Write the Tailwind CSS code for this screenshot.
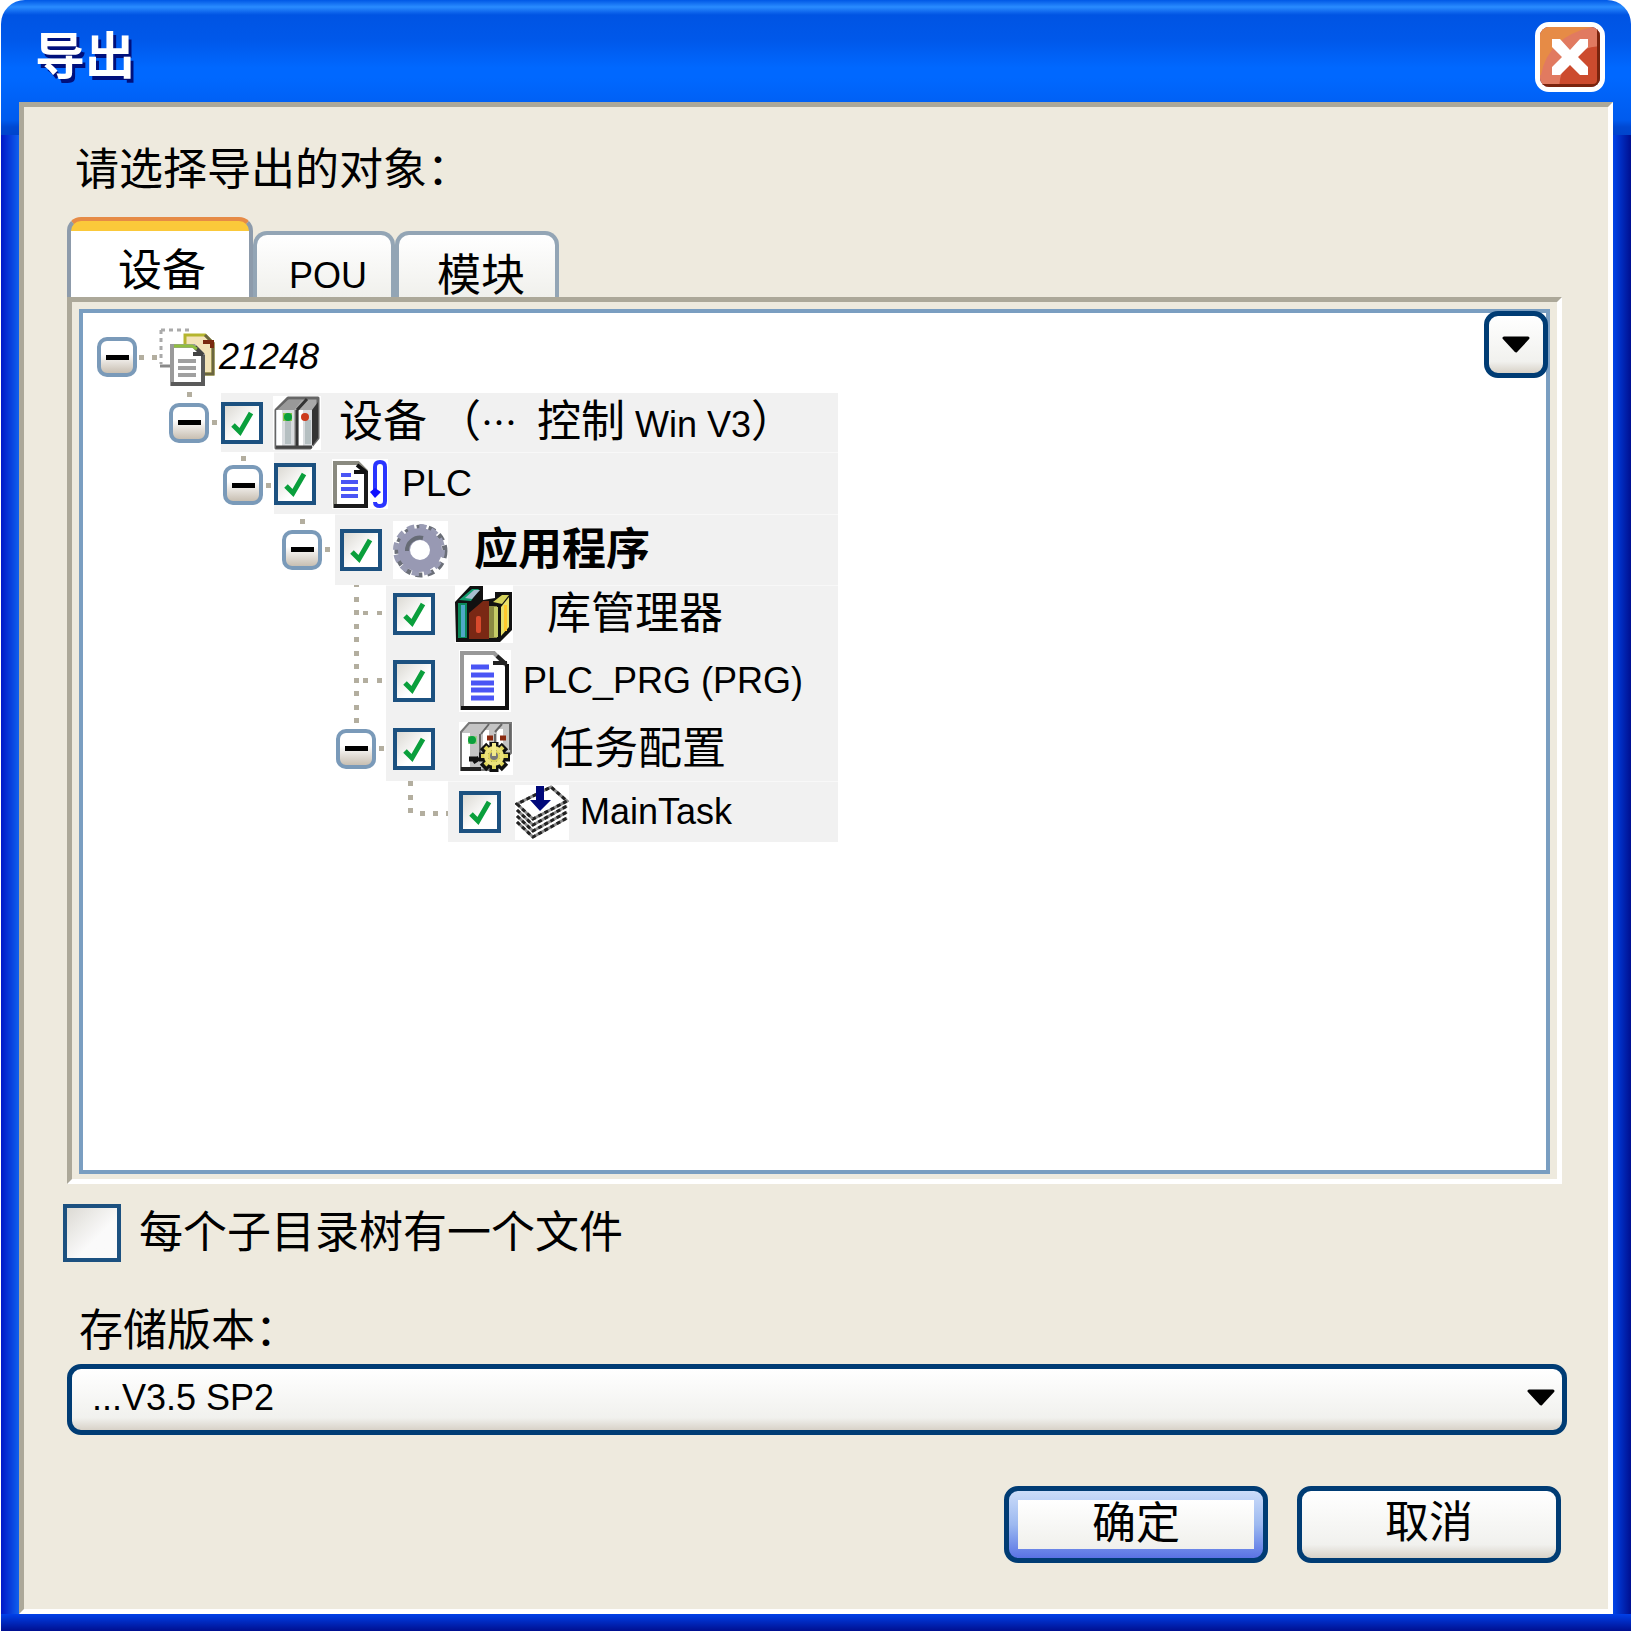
<!DOCTYPE html>
<html lang="zh-CN">
  <head>
    <meta charset="UTF-8" />
    <meta name="viewport" content="width=device-width, initial-scale=1.0" />
    <title>导出</title>
    <script src="https://cdn.jsdelivr.net/npm/@tailwindcss/browser@4"></script>
  </head>
  <body
    class="bg-white px-px pb-px min-h-screen flex flex-col text-black text-[44px] leading-[48px] font-['Liberation_Sans','Noto_Sans_CJK_SC',sans-serif]"
  >
    <!-- icons used more than once -->
    <svg class="hidden">
      <symbol id="tick" viewBox="0 0 42 42">
        <path d="M12 23l7 7L30 11" fill="none" stroke="#0a9f3c" stroke-width="5" />
      </symbol>
      <symbol id="arrow" viewBox="0 0 28 17">
        <path
          d="M2 2h24L14 15z"
          stroke="#000"
          stroke-width="3"
          stroke-linejoin="round"
        />
      </symbol>
    </svg>
    <div
      class="flex-1 flex flex-col px-[18px] pb-[17px] rounded-t-[24px] [background:linear-gradient(#0058e6,#2a8cff_7px,#0a60ea_13px,#0054e3_15px,#0058ea_40px,#0068ff_68px,#0068ff_78px,#005bee_120px,#0048d2_127px,#0044cc_135px)_0_0/100%_135px_no-repeat,linear-gradient(#0040e8,#000f90)_0_100%/100%_17px_no-repeat,linear-gradient(90deg,#0018c8,#1060ee)_0_0/18px_100%_no-repeat,linear-gradient(90deg,#0044e8,#000f90)_100%_0/18px_100%_no-repeat]"
    >
      <header class="h-[102px] flex items-center justify-between pl-4 pr-2 pt-3">
        <h1
          class="text-[50px] leading-[64px] font-bold text-white [text-shadow:3px_4px_0_#00107c]"
        >
          导出
        </h1>
        <button
          type="button"
          aria-label="关闭"
          class="w-[70px] h-[70px] rounded-[14px] border-[5px] border-white overflow-hidden"
        >
          <svg viewBox="0 0 60 60" class="w-full h-full">
            <rect width="60" height="60" fill="#cc4b2e" />
            <path d="M0 0h60v19Q22 22 19 60H0z" fill="#e17a60" />
            <path d="M0 0h52Q8 10 1 48H0z" fill="#e68b46" />
            <path d="M57 2v51q0 4-4 4H2v3h58V2z" fill="#7a240e" />
            <path
              d="M12 12h8l10 11 10-11h8v8L38 30l10 10v8h-8L30 38 20 48h-8v-8l10-10-10-10z"
              fill="#fff"
            />
          </svg>
        </button>
      </header>
      <main
        class="flex-1 flex flex-col bg-[#eeeade] border-[5px] border-t-[#aca899] border-l-[#aca899] border-r-white border-b-white pl-[39px] pr-[41px] pt-[39px] pb-[46px]"
      >
        <p class="ml-3">请选择导出的对象：</p>

        <div class="ml-1 mt-[23px] h-20 flex items-end leading-10" role="tablist">
          <button
            type="button"
            role="tab"
            aria-selected="true"
            class="w-[186px] h-20 rounded-t-[14px] border-4 border-b-0 border-x-[#8d9bab] border-t-[#e68b46] pt-6 pl-1 bg-linear-to-b from-[#fbc93a] from-[10px] to-white to-[10px]"
          >
            设备
          </button>
          <button
            type="button"
            role="tab"
            class="w-[142px] h-[66px] rounded-t-[14px] border-4 border-b-0 border-[#93a5b5] pt-5 pl-2 text-[36px] bg-linear-to-b from-white to-[#f0f0ec]"
          >
            POU
          </button>
          <button
            type="button"
            role="tab"
            class="w-[164px] h-[66px] rounded-t-[14px] border-4 border-b-0 border-[#93a5b5] pt-5 pl-2 bg-linear-to-b from-white to-[#f0f0ec]"
          >
            模块
          </button>
        </div>

        <div
          class="flex-1 flex ml-1 mr-[5px] border-[5px] border-t-[#aca899] border-l-[#aca899] border-r-white border-b-white px-[7px] pt-[7px] pb-[5px]"
        >
          <div class="flex-1 relative bg-white border-4 border-[#7a9ec1]">
            <button
              type="button"
              aria-label="展开"
              class="absolute -top-[2px] -right-[2px] w-16 h-[67px] grid place-items-center rounded-[14px] border-[5px] border-[#003c74] bg-linear-to-b from-white via-[#f1f1ee] via-80% to-[#d8d2c8]"
            >
              <svg class="w-7 h-[17px]"><use href="#arrow" /></svg>
            </button>

            <ul class="max-w-[755px]">
              <li class="h-20 flex items-center pt-2 pl-[14px]">
                <button
                  type="button"
                  aria-label="折叠"
                  class="w-10 h-10 grid place-items-center rounded-[10px] border-4 border-[#7a9ab9] bg-linear-to-b from-white from-40% to-[#c8bfb2]"
                >
                  <span class="w-[23px] h-[5px] bg-black"></span>
                </button>
                <span class="w-[5px] h-[5px] ml-[2px] bg-[#b3ae9f]"></span>
                <span class="w-[5px] h-[5px] ml-2 bg-[#b3ae9f]"></span>
                <svg class="w-14 h-[58px] ml-[2px]" viewBox="0 0 56 58">
                  <path
                    d="M2 2h28M2 2v34"
                    fill="none"
                    stroke="#aaa"
                    stroke-width="3"
                    stroke-dasharray="4 4"
                  />
                  <path d="M1 38h12" stroke="#888" stroke-width="3" />
                  <path d="M26 7h20l8 8v31H26z" fill="#f3e3b8" stroke="#b5b52e" stroke-width="3" />
                  <path d="M46 7l8 8v31H42" fill="none" stroke="#6b6540" stroke-width="3" />
                  <path d="M44 14h9v6" fill="none" stroke="#7a2a10" stroke-width="4" />
                  <path d="M13 18h22l9 9v29H13z" fill="#fff" stroke="#9a9a9a" stroke-width="4" />
                  <path d="M44 27v29H12" fill="none" stroke="#5a5a5a" stroke-width="4" />
                  <path d="M34 26h10M36 19l8 8" fill="none" stroke="#444" stroke-width="4" />
                  <path d="M15 18h18l5 3" fill="none" stroke="#8fbf3f" stroke-width="3" />
                  <path d="M19 33h18M19 40h18M19 47h18" stroke="#a0a0a0" stroke-width="4" />
                </svg>
                <span class="ml-1 text-[36px] italic">21248</span>
              </li>

              <li class="h-[59px] flex pl-[86px]">
                <div class="relative w-[52px] flex items-center">
                  <span class="absolute left-[18px] -top-[1px] w-[5px] h-[5px] bg-[#b3ae9f]"></span>
                  <button
                    type="button"
                    aria-label="折叠"
                    class="w-10 h-10 grid place-items-center rounded-[10px] border-4 border-[#7a9ab9] bg-linear-to-b from-white from-40% to-[#c8bfb2]"
                  >
                    <span class="w-[23px] h-[5px] bg-black"></span>
                  </button>
                  <span class="w-[5px] h-[5px] ml-[3px] bg-[#b3ae9f]"></span>
                </div>
                <div class="flex-1 flex items-center bg-[#f1f1f1]">
                  <div class="grid">
                    <input
                      id="device"
                      type="checkbox"
                      checked
                      class="peer [grid-area:1/1] appearance-none w-[42px] h-[42px] border-4 border-[#1c5180] bg-linear-to-br from-[#dcdad4] to-white to-60%"
                    />
                    <svg class="[grid-area:1/1] w-[42px] h-[42px] pointer-events-none invisible peer-checked:visible"><use href="#tick" /></svg>
                  </div>
                  <svg class="w-12 h-[54px] ml-[10px]" viewBox="0 0 48 54">
                    <rect width="48" height="54" fill="#fff" />
                    <path d="M3 14L15 2h30v40l-8 10H3z" fill="#a8a8a8" stroke="#666" stroke-width="3" stroke-linejoin="round" />
                    <path d="M3 14h18v37H3zM25 14h15v37H25z" fill="#d9dcdf" />
                    <path d="M4 14h5v37H4zM26 14h4v37h-4z" fill="#fff" />
                    <path d="M12 24h6v24h-6zM32 24h6v24h-6z" fill="#b5bfc1" />
                    <path d="M39 14l6-8v36l-6 8z" fill="#333" />
                    <path d="M24 14v37M24 14L34 3" stroke="#333" stroke-width="3" />
                    <path d="M4 14L15 4h14l-8 10z" fill="#999" />
                    <path d="M10 17h9v8h-9z" fill="#8bc34a" />
                    <circle cx="15" cy="21" r="4" fill="#0a9f3c" />
                    <circle cx="32" cy="21" r="4" fill="#cc3a1c" />
                    <path d="M3 51h36" stroke="#444" stroke-width="3" />
                  </svg>
                  <label for="device" class="ml-[18px] whitespace-nowrap"
                    >设备<span class="text-[36px]">&nbsp;</span>（<span
                      class="text-[36px] font-['Noto_Sans_CJK_SC',sans-serif]"
                      >⋯</span
                    ><span class="text-[36px]">&nbsp; </span>控制<span class="text-[36px]"> Win V3</span>）</label
                  >
                </div>
              </li>

              <li class="h-[62px] flex pl-[140px]">
                <div class="relative w-[51px] flex items-center">
                  <span class="absolute left-[18px] top-[4px] w-[5px] h-[5px] bg-[#b3ae9f]"></span>
                  <button
                    type="button"
                    aria-label="折叠"
                    class="w-10 h-10 mt-1 grid place-items-center rounded-[10px] border-4 border-[#7a9ab9] bg-linear-to-b from-white from-40% to-[#c8bfb2]"
                  >
                    <span class="w-[23px] h-[5px] bg-black"></span>
                  </button>
                  <span class="w-[5px] h-[5px] mt-1 ml-[3px] bg-[#b3ae9f]"></span>
                </div>
                <div class="flex-1 flex items-center bg-[#f1f1f1] border-t border-[#f8f8f8]">
                  <div class="grid">
                    <input
                      id="plc"
                      type="checkbox"
                      checked
                      class="peer [grid-area:1/1] appearance-none w-[42px] h-[42px] border-4 border-[#1c5180] bg-linear-to-br from-[#dcdad4] to-white to-60%"
                    />
                    <svg class="[grid-area:1/1] w-[42px] h-[42px] pointer-events-none invisible peer-checked:visible"><use href="#tick" /></svg>
                  </div>
                  <svg class="w-14 h-[50px] ml-4" viewBox="0 0 56 50">
                    <rect width="56" height="50" fill="#fff" />
                    <path d="M3 47V4h23l8 8v35z" fill="#fff" stroke="#8a8a80" stroke-width="4" />
                    <path d="M34 12v35H2" fill="none" stroke="#1a1a1a" stroke-width="4" />
                    <path d="M22 13h12M25 6l9 7" stroke="#111" stroke-width="4" />
                    <path d="M9 16h10M9 23h17M9 30h17M9 37h17" stroke="#4a55f5" stroke-width="4" />
                    <path d="M43 32V8q0-5 5-5t5 5v34q0 5-5 5t-5-4" fill="none" stroke="#2a35ff" stroke-width="4" />
                    <path d="M38 33l5-4 6 4-6 6z" fill="#1010ff" />
                  </svg>
                  <label for="plc" class="ml-[14px] text-[36px]">PLC</label>
                </div>
              </li>

              <li class="h-[71px] flex pl-[199px]">
                <div class="relative w-[53px] flex items-center">
                  <span class="absolute left-[18px] top-[5px] w-[5px] h-[5px] bg-[#b3ae9f]"></span>
                  <button
                    type="button"
                    aria-label="折叠"
                    class="w-10 h-10 grid place-items-center rounded-[10px] border-4 border-[#7a9ab9] bg-linear-to-b from-white from-40% to-[#c8bfb2]"
                  >
                    <span class="w-[23px] h-[5px] bg-black"></span>
                  </button>
                  <span class="w-[5px] h-[5px] ml-[3px] bg-[#b3ae9f]"></span>
                </div>
                <div class="flex-1 flex items-center pl-[5px] bg-[#f1f1f1] border-t border-[#f8f8f8]">
                  <div class="grid">
                    <input
                      id="app"
                      type="checkbox"
                      checked
                      class="peer [grid-area:1/1] appearance-none w-[42px] h-[42px] border-4 border-[#1c5180] bg-linear-to-br from-[#dcdad4] to-white to-60%"
                    />
                    <svg class="[grid-area:1/1] w-[42px] h-[42px] pointer-events-none invisible peer-checked:visible"><use href="#tick" /></svg>
                  </div>
                  <svg class="w-[55px] h-[58px] ml-[11px]" viewBox="0 0 55 58">
                    <rect width="55" height="58" fill="#fff" />
                    <circle cx="28" cy="30" r="24" fill="none" stroke="#6b6f78" stroke-width="5" stroke-dasharray="7 5" />
                    <circle cx="26" cy="29" r="23" fill="none" stroke="#9a9cb4" stroke-width="6" stroke-dasharray="7 5" />
                    <circle cx="27" cy="29" r="16" fill="none" stroke="#9899b3" stroke-width="12" />
                    <path d="M14 30a13 13 0 0 1 16-13" fill="none" stroke="#666b75" stroke-width="4" />
                  </svg>
                  <label for="app" class="ml-[26px] font-bold">应用程序</label>
                </div>
              </li>

              <li class="h-[61px] flex pl-[251px]">
                <svg class="w-[52px] h-[61px]" viewBox="0 0 52 61">
                  <path
                    d="M20 0h5v2h-5zM20 12h5v5h-5zM20 25h5v5h-5zM20 39h5v5h-5zM20 52h5v5h-5zM29 26h5v4h-5zM43 26h5v4h-5z"
                    fill="#b3ae9f"
                  />
                </svg>
                <div class="flex-1 flex items-center pl-[7px] pb-1 bg-[#f1f1f1] border-t border-[#f8f8f8]">
                  <div class="grid">
                    <input
                      id="library"
                      type="checkbox"
                      checked
                      class="peer [grid-area:1/1] appearance-none w-[42px] h-[42px] border-4 border-[#1c5180] bg-linear-to-br from-[#dcdad4] to-white to-60%"
                    />
                    <svg class="[grid-area:1/1] w-[42px] h-[42px] pointer-events-none invisible peer-checked:visible"><use href="#tick" /></svg>
                  </div>
                  <svg class="w-[58px] h-[58px] ml-5" viewBox="0 0 58 58">
                    <rect width="58" height="58" fill="#fff" />
                    <path d="M0 17L15 1h13v14l12-2V7h17v38L45 57H1z" fill="#111" />
                    <path d="M3 18h9v35H3z" fill="#0b8a5a" />
                    <path d="M6 20h4v32H6z" fill="#4fa8c8" />
                    <path d="M4 15L17 4h7l-8 12z" fill="#12a070" />
                    <path d="M10 13l9-8h6l-8 9z" fill="#a9bed0" />
                    <path d="M14 54V28l14-12h6v38z" fill="#7a2814" />
                    <rect x="21" y="31" width="5" height="17" rx="2" fill="#d84a2c" />
                    <path d="M34 21h8v32h-8z" fill="#8b8a42" />
                    <path d="M39 22h4v30h-4z" fill="#c6cc66" />
                    <path d="M38 17l9-7h7l-7 9z" fill="#d5d35c" />
                    <path d="M46 22l8-10v30l-8 9z" fill="#e8e06a" />
                    <path d="M49 20h3v26h-3z" fill="#ffc82c" />
                  </svg>
                  <label for="library" class="ml-[34px]">库管理器</label>
                </div>
              </li>

              <li class="h-[70px] flex pl-[251px]">
                <svg class="w-[52px] h-[70px]" viewBox="0 0 52 70">
                  <path
                    d="M20 5h5v5h-5zM20 18h5v5h-5zM20 32h5v5h-5zM20 45h5v5h-5zM20 59h5v5h-5zM29 32h5v5h-5zM43 32h5v5h-5z"
                    fill="#b3ae9f"
                  />
                </svg>
                <div class="flex-1 flex items-center pl-[7px] bg-[#f1f1f1]">
                  <div class="grid">
                    <input
                      id="program"
                      type="checkbox"
                      checked
                      class="peer [grid-area:1/1] appearance-none w-[42px] h-[42px] border-4 border-[#1c5180] bg-linear-to-br from-[#dcdad4] to-white to-60%"
                    />
                    <svg class="[grid-area:1/1] w-[42px] h-[42px] pointer-events-none invisible peer-checked:visible"><use href="#tick" /></svg>
                  </div>
                  <svg class="w-[52px] h-[62px] ml-6" viewBox="0 0 52 62">
                    <rect width="52" height="62" fill="#fff" />
                    <path d="M3 58V3h32l13 13v42z" fill="#fff" stroke="#999" stroke-width="4" />
                    <path d="M48 14v44H2" fill="none" stroke="#111" stroke-width="4" />
                    <path d="M34 13h14M38 6l9 8" stroke="#222" stroke-width="4" />
                    <path d="M12 17h18M12 25h23M12 33h23M12 40h23M12 48h23" stroke="#4a55f5" stroke-width="5" />
                  </svg>
                  <label for="program" class="ml-3 text-[36px]">PLC_PRG (PRG)</label>
                </div>
              </li>

              <li class="h-[65px] flex pl-[253px]">
                <div class="relative w-[50px] flex items-center">
                  <span class="absolute left-[18px] top-[2px] w-[5px] h-[5px] bg-[#b3ae9f]"></span>
                  <button
                    type="button"
                    aria-label="折叠"
                    class="w-10 h-10 grid place-items-center rounded-[10px] border-4 border-[#7a9ab9] bg-linear-to-b from-white from-40% to-[#c8bfb2]"
                  >
                    <span class="w-[23px] h-[5px] bg-black"></span>
                  </button>
                  <span class="w-[5px] h-[5px] ml-[3px] bg-[#b3ae9f]"></span>
                </div>
                <div class="flex-1 flex items-center pl-[7px] bg-[#f1f1f1]">
                  <div class="grid">
                    <input
                      id="config"
                      type="checkbox"
                      checked
                      class="peer [grid-area:1/1] appearance-none w-[42px] h-[42px] border-4 border-[#1c5180] bg-linear-to-br from-[#dcdad4] to-white to-60%"
                    />
                    <svg class="[grid-area:1/1] w-[42px] h-[42px] pointer-events-none invisible peer-checked:visible"><use href="#tick" /></svg>
                  </div>
                  <svg class="w-[54px] h-[53px] ml-6" viewBox="0 0 54 53">
                    <rect width="54" height="53" fill="#fff" />
                    <path d="M2 10l8-9h42v30L34 48H2z" fill="#c4c4c4" stroke="#777" stroke-width="2" />
                    <path d="M3 11h8v35H3zM24 8h6v18h-6zM38 7h6v16h-6z" fill="#fff" />
                    <path d="M21 12v22M22 12l8-10M36 12v10M36 10l7-8M51 2v26" stroke="#666" stroke-width="2" />
                    <path d="M2 47h20" stroke="#222" stroke-width="4" />
                    <path d="M9 14h9v8H9z" fill="#9ccf8a" />
                    <circle cx="13" cy="18" r="4" fill="#0a9f3c" />
                    <path d="M28 16h6M41 16h6" stroke="#8a2a10" stroke-width="5" />
                    <path
                      d="M35 20v30M20 35h31M24 24l22 22M46 24L24 46"
                      stroke="#111"
                      stroke-width="9"
                    />
                    <circle cx="35" cy="35" r="12" fill="#111" />
                    <path
                      d="M35 21v26M22 34h27M26 25l18 18M44 25L26 43"
                      stroke="#e0d65c"
                      stroke-width="4"
                    />
                    <circle cx="35" cy="34" r="8" fill="none" stroke="#ece27a" stroke-width="4" />
                    <circle cx="35" cy="34" r="4" fill="#777" />
                    <path d="M33 21h4v13h-4z" fill="#f2ea8a" />
                    <path d="M10 37h8M14 40l6-4" stroke="#111" stroke-width="5" />
                  </svg>
                  <label for="config" class="ml-[37px]">任务配置</label>
                </div>
              </li>

              <li class="h-[61px] flex pl-[323px]">
                <svg class="w-[42px] h-[61px]" viewBox="0 0 42 61">
                  <path
                    d="M2 0h5v5H2zM2 14h5v5H2zM2 27h5v5H2zM14 30h5v5h-5zM27 30h5v5h-5zM40 30h2v5h-2z"
                    fill="#b3ae9f"
                  />
                </svg>
                <div class="flex-1 flex items-center pl-[11px] bg-[#f1f1f1] border-t border-[#f8f8f8]">
                  <div class="grid">
                    <input
                      id="task"
                      type="checkbox"
                      checked
                      class="peer [grid-area:1/1] appearance-none w-[42px] h-[42px] border-4 border-[#1c5180] bg-linear-to-br from-[#dcdad4] to-white to-60%"
                    />
                    <svg class="[grid-area:1/1] w-[42px] h-[42px] pointer-events-none invisible peer-checked:visible"><use href="#tick" /></svg>
                  </div>
                  <svg class="w-[54px] h-[55px] ml-[14px]" viewBox="0 0 54 55">
                    <rect width="54" height="55" fill="#fff" />
                    <g fill="none" stroke="#8a8a8a" stroke-width="3">
                      <path d="M2 37l16 15 34-19" />
                      <path d="M2 31l16 15 34-19" />
                      <path d="M2 25l16 15 34-19" />
                    </g>
                    <g fill="none" stroke="#222" stroke-width="3" stroke-dasharray="4 3">
                      <path d="M2 37l16 15 34-19" />
                      <path d="M2 31l16 15 34-19" />
                      <path d="M2 25l16 15 34-19" />
                    </g>
                    <path d="M2 19l16 15 34-18L36 2z" fill="#fff" stroke="#8a8a8a" stroke-width="3" />
                    <path d="M2 19l16 15 34-18L36 2z" fill="none" stroke="#222" stroke-width="3" stroke-dasharray="4 3" />
                    <path d="M21 1h8v14h7L25 26 15 15h6z" fill="#00087a" />
                  </svg>
                  <label for="task" class="ml-[11px] text-[36px]">MainTask</label>
                </div>
              </li>
            </ul>
          </div>
        </div>

        <div class="mt-5 flex items-center">
          <input
            id="onefile"
            type="checkbox"
            class="appearance-none w-[58px] h-[58px] border-4 border-[#1c5180] bg-linear-to-br from-[#dcdad4] to-[#fafafa] to-60% checked:bg-[#0a9f3c]"
          />
          <label for="onefile" class="ml-[18px]">每个子目录树有一个文件</label>
        </div>

        <label for="version" class="mt-[45px] ml-4">存储版本：</label>
        <div class="mt-[9px] ml-1 grid items-center">
          <select
            id="version"
            class="[grid-area:1/1] appearance-none w-full h-[71px] pl-5 pb-1 text-[36px] rounded-[14px] border-[5px] border-[#003c74] bg-linear-to-b from-white via-[#f1f1ee] via-80% to-[#d8d2c8]"
          >
            <option>...V3.5 SP2</option>
          </select>
          <svg class="[grid-area:1/1] justify-self-end mr-3 mt-[-4px] w-7 h-[17px] pointer-events-none"><use href="#arrow" /></svg>
        </div>

        <div class="mt-[51px] mr-[6px] flex justify-end gap-[29px]">
          <button
            type="button"
            class="w-[264px] h-[77px] flex p-[9px] rounded-[14px] border-[5px] border-[#003c74] bg-linear-to-b from-[#cbdcf9] via-[#9db9f0] to-[#5b72e4]"
          >
            <span class="flex-1 bg-linear-to-b from-white to-[#f0f0ec]">确定</span>
          </button>
          <button
            type="button"
            class="w-[264px] h-[77px] pb-1 rounded-[14px] border-[5px] border-[#003c74] bg-linear-to-b from-white via-[#f1f1ee] via-80% to-[#d8d2c8]"
          >
            取消
          </button>
        </div>
      </main>
    </div>
  </body>
</html>
